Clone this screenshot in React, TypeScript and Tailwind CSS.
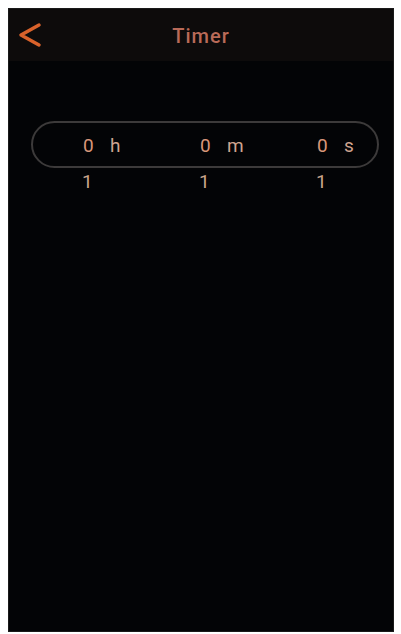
const units = ["h", "m", "s"];

export default function App() {
  return (
    <div className="w-[401px] h-[634px] bg-white pt-[8px] pl-[8px] pr-[7px] pb-[2px] font-['Roboto',sans-serif] overflow-hidden">
      <div className="h-full w-full bg-[#030406] border border-[#1a1a1a] flex flex-col">
        {/* header */}
        <div className="h-[52px] bg-[#0d0b0b] flex items-center relative">
          <svg width="26" height="26" viewBox="0 0 26 26" className="ml-[8px]">
            <polyline points="22,3 4,13 22,23" fill="none" stroke="#d9622b" strokeWidth="3.5" strokeLinecap="round" strokeLinejoin="round" />
          </svg>
          <div className="absolute left-0 right-0 top-[12px] text-center text-[20px] tracking-[1px] text-[#b96a58] font-medium">
            Timer
          </div>
        </div>

        {/* time picker */}
        <div className="mt-[60px] ml-[22px] mr-[14px] h-[47px] rounded-full border-2 border-[#3c3a3a] grid grid-cols-[117px_117px_1fr] items-center pl-[50px] pt-[2px]">
          {units.map((u) => (
            <div key={u} className="flex items-baseline text-[19px] leading-none">
              <span className="w-[10px] text-center text-[#d9967a]">0</span>
              <span className="ml-[17px] text-[#cfa590]">{u}</span>
            </div>
          ))}
        </div>
        <div className="ml-[22px] mt-[4px] grid grid-cols-[117px_117px_1fr] pl-[51px] text-[19px] leading-none text-[#c9a48c]">
          {units.map((u) => (
            <span key={u} className="w-[10px] text-center">1</span>
          ))}
        </div>
      </div>
    </div>
  );
}
